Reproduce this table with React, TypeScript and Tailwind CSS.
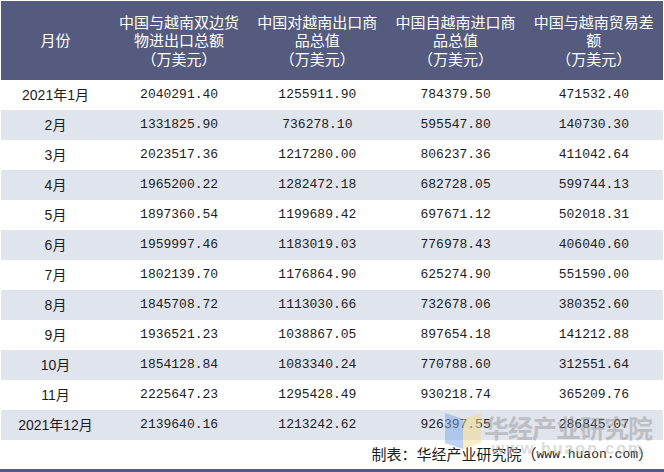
const rows: [string, string, string, string, string][] = [
  ['2021年1月', '2040291.40', '1255911.90', '784379.50', '471532.40'],
  ['2月', '1331825.90', '736278.10', '595547.80', '140730.30'],
  ['3月', '2023517.36', '1217280.00', '806237.36', '411042.64'],
  ['4月', '1965200.22', '1282472.18', '682728.05', '599744.13'],
  ['5月', '1897360.54', '1199689.42', '697671.12', '502018.31'],
  ['6月', '1959997.46', '1183019.03', '776978.43', '406040.60'],
  ['7月', '1802139.70', '1176864.90', '625274.90', '551590.00'],
  ['8月', '1845708.72', '1113030.66', '732678.06', '380352.60'],
  ['9月', '1936521.23', '1038867.05', '897654.18', '141212.88'],
  ['10月', '1854128.84', '1083340.24', '770788.60', '312551.64'],
  ['11月', '2225647.23', '1295428.49', '930218.74', '365209.76'],
  ['2021年12月', '2139640.16', '1213242.62', '926397.55', '286845.07'],
];

const headers = [
  ['月份'],
  ['中国与越南双边货', '物进出口总额', '（万美元）'],
  ['中国对越南出口商', '品总值', '（万美元）'],
  ['中国自越南进口商', '品总值', '（万美元）'],
  ['中国与越南贸易差', '额', '（万美元）'],
];

export default function App() {
  return (
    <div className="relative w-[664px] h-[472px] bg-white overflow-hidden font-['Noto_Sans_CJK_SC',sans-serif]">
      <div className="pt-px pl-px w-[663px]">
        {/* header */}
        <div className="grid grid-cols-[109px_repeat(4,1fr)] h-[79px] bg-[#545b7e] text-white">
          {headers.map((h, i) => (
            <div key={i} className="flex flex-col items-center justify-center text-[15px] leading-[18.5px]">
              {h.map((l) => (
                <span key={l}>{l}</span>
              ))}
            </div>
          ))}
        </div>

        {/* rows */}
        {rows.map((r, i) => (
          <div
            key={r[0]}
            className={`grid grid-cols-[109px_repeat(4,1fr)] h-[30px] items-center text-[#1c1c1c] ${
              i % 2 === 1 ? 'bg-[#e0e4ed]' : 'bg-white'
            }`}
          >
            <div className="text-center text-[14px] font-['Liberation_Sans','Noto_Sans_CJK_SC',sans-serif]">
              {r[0]}
            </div>
            {r.slice(1).map((v, j) => (
              <div key={j} className="text-center text-[13px] font-['Liberation_Mono',monospace]">
                {v}
              </div>
            ))}
          </div>
        ))}
      </div>

      {/* source */}
      <div className="flex justify-end pr-[11px] h-[29px] items-center text-[15px] text-[#1c1c1c]">
        <span>制表：华经产业研究院（</span>
        <span className="text-[13px] font-['Liberation_Mono',monospace]">www.huaon.com</span>
        <span>）</span>
      </div>
      <div className="absolute left-0 right-0 bottom-0 h-[3px] bg-[#545b7e]" />

      {/* watermark */}
      <div className="absolute left-[445px] top-[413px] flex items-start pointer-events-none opacity-50">
        <svg width="36" height="36" viewBox="0 0 36 36">
          <polygon points="0,0 18,6 18,36 0,30" fill="#7fa9e6" />
          <polygon points="18,6 36,0 36,30 18,36" fill="#f3dc8a" />
        </svg>
        <div className="ml-[3px] flex flex-col items-center">
          <span className="text-[25px] leading-[28px] font-bold text-[#9a9a9a] tracking-[-1px]">
            华经产业研究院
          </span>
          <span className="text-[16px] leading-[16px] font-bold text-[#b8b8b8] tracking-[2px] font-['Liberation_Sans',sans-serif]">
            www.huaon.com
          </span>
        </div>
      </div>
    </div>
  );
}
